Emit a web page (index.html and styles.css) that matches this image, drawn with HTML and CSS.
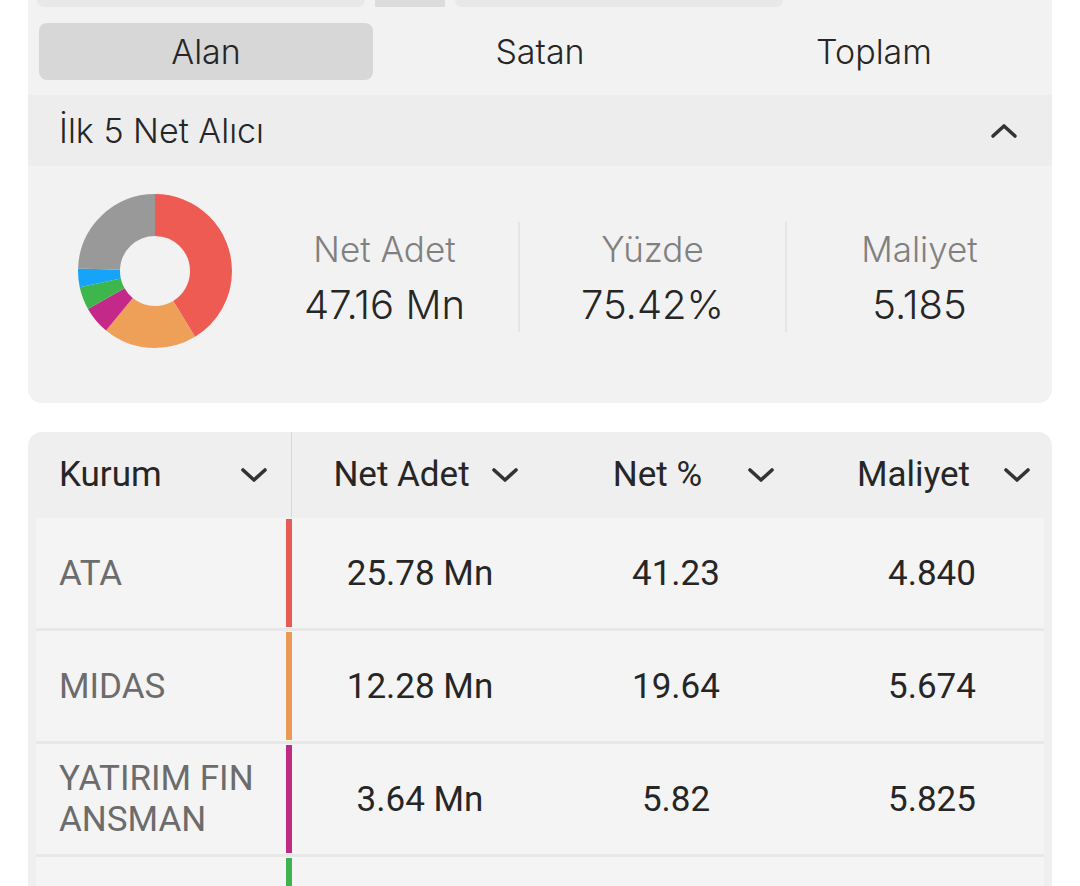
FILE: index.html
```html
<!DOCTYPE html>
<html lang="tr">
<head>
<meta charset="utf-8">
<title>İlk 5 Net Alıcı</title>
<link rel="stylesheet" href="styles.css">
</head>
<body>
<div class="page">
  <section class="summary">
    <div class="peek">
      <div class="peek-a"></div>
      <div class="peek-b"></div>
      <div class="peek-a"></div>
    </div>
    <div class="segmented">
      <div class="seg active">Alan</div>
      <div class="seg">Satan</div>
      <div class="seg">Toplam</div>
    </div>
    <div class="section-head">
      <span>İlk 5 Net Alıcı</span>
      <svg class="chev" width="28" height="16" viewBox="0 0 28 16"><path d="M3 13 L14 3 L25 13" /></svg>
    </div>
    <div class="summary-body">
      <div class="donut-wrap">
        <svg width="154" height="154" viewBox="0 0 154 154">
          <g transform="rotate(-90 77 77)" fill="none" stroke-width="42">
            <circle cx="77" cy="77" r="56" stroke="#ee5b53" stroke-dasharray="145.07 351.86" stroke-dashoffset="0"/>
            <circle cx="77" cy="77" r="56" stroke="#efa058" stroke-dasharray="69.10 351.86" stroke-dashoffset="-145.07"/>
            <circle cx="77" cy="77" r="56" stroke="#c4298a" stroke-dasharray="20.48 351.86" stroke-dashoffset="-214.17"/>
            <circle cx="77" cy="77" r="56" stroke="#3db64b" stroke-dasharray="16.89 351.86" stroke-dashoffset="-234.65"/>
            <circle cx="77" cy="77" r="56" stroke="#15a4f7" stroke-dasharray="13.83 351.86" stroke-dashoffset="-251.54"/>
            <circle cx="77" cy="77" r="56" stroke="#999999" stroke-dasharray="86.49 351.86" stroke-dashoffset="-265.37"/>
          </g>
        </svg>
      </div>
      <div class="stats">
        <div class="stat"><div class="stat-label">Net Adet</div><div class="stat-value">47.16 Mn</div></div>
        <div class="stat"><div class="stat-label">Yüzde</div><div class="stat-value">75.42%</div></div>
        <div class="stat"><div class="stat-label">Maliyet</div><div class="stat-value">5.185</div></div>
      </div>
    </div>
  </section>

  <section class="table">
    <div class="thead">
      <div class="th th-kurum"><span>Kurum</span><svg class="chev" width="28" height="16" viewBox="0 0 28 16"><path d="M3 3 L14 13 L25 3" /></svg></div>
      <div class="th th-num"><span class="th-label">Net Adet</span><svg class="chev" width="28" height="16" viewBox="0 0 28 16"><path d="M3 3 L14 13 L25 3" /></svg></div>
      <div class="th th-num"><span class="th-label">Net %</span><svg class="chev" width="28" height="16" viewBox="0 0 28 16"><path d="M3 3 L14 13 L25 3" /></svg></div>
      <div class="th th-num th-last"><span class="th-label">Maliyet</span><svg class="chev" width="28" height="16" viewBox="0 0 28 16"><path d="M3 3 L14 13 L25 3" /></svg></div>
    </div>
    <div class="tbody">
      <div class="row">
        <div class="name">ATA</div>
        <div class="bar bar-red"></div>
        <div class="val">25.78 Mn</div>
        <div class="val">41.23</div>
        <div class="val val-last">4.840</div>
      </div>
      <div class="row">
        <div class="name">MIDAS</div>
        <div class="bar bar-orange"></div>
        <div class="val">12.28 Mn</div>
        <div class="val">19.64</div>
        <div class="val val-last">5.674</div>
      </div>
      <div class="row">
        <div class="name"><span class="wrap">YATIRIM FINANSMAN</span></div>
        <div class="bar bar-magenta"></div>
        <div class="val">3.64 Mn</div>
        <div class="val">5.82</div>
        <div class="val val-last">5.825</div>
      </div>
      <div class="row">
        <div class="name"></div>
        <div class="bar bar-green"></div>
        <div class="val"></div>
        <div class="val"></div>
        <div class="val val-last"></div>
      </div>
    </div>
  </section>
</div>
</body>
</html>
```

FILE: styles.css
```css
html, body {
  margin: 0;
  padding: 0;
  background: #ffffff;
  height: 886px;
  overflow: hidden;
}
body {
  font-family: Inter, "Noto Sans", sans-serif;
  color: #222222;
}
.page {
  padding: 0 28px;
}

/* summary card */
.summary {
  background: #f2f2f2;
  border-radius: 0 0 14px 14px;
  height: 403px;
}
.peek {
  display: flex;
  gap: 10px;
  padding-left: 9px;
  height: 7px;
}
.peek-a {
  width: 328px;
  background: #e8e8e8;
  border-radius: 0 0 10px 10px;
}
.peek-b {
  width: 70px;
  background: #dcdcdc;
}
.segmented {
  display: grid;
  grid-template-columns: repeat(3, 1fr);
  margin: 16px 11px 0;
  height: 57px;
}
.seg {
  display: flex;
  align-items: center;
  justify-content: center;
  font-size: 34px;
  font-weight: 350;
  color: #262626;
  border-radius: 8px;
}
.seg.active {
  background: #d7d7d7;
}
.section-head {
  margin-top: 15px;
  height: 71px;
  background: #ededed;
  display: flex;
  align-items: center;
  justify-content: space-between;
  padding: 0 34px 0 31px;
  font-size: 34px;
  font-weight: 350;
  color: #262626;
}
.chev path {
  fill: none;
  stroke: #333333;
  stroke-width: 3.6;
  stroke-linecap: round;
  stroke-linejoin: round;
}
.summary-body {
  display: flex;
}
.donut-wrap {
  width: 223px;
  box-sizing: border-box;
  padding: 28px 0 0 50px;
}
.donut-wrap svg {
  display: block;
}
.stats {
  flex: 1;
  display: grid;
  grid-template-columns: repeat(3, 1fr);
  margin-top: 56px;
  height: 110px;
}
.stat {
  text-align: center;
  padding-top: 6px;
}
.stat + .stat {
  border-left: 2px solid #e5e5e5;
}
.stat-label {
  font-size: 35px;
  font-weight: 350;
  line-height: 42px;
  color: #808080;
}
.stat-value {
  margin-top: 10px;
  font-size: 40px;
  font-weight: 350;
  line-height: 50px;
  color: #262626;
}

/* table card */
.table {
  margin-top: 29px;
  background: #efefef;
  border-radius: 14px 14px 0 0;
  font-family: Roboto, "Liberation Sans", sans-serif;
  height: 460px;
  overflow: hidden;
}
.thead {
  display: grid;
  grid-template-columns: 264px 256px 256px 1fr;
  height: 85px;
}
.th {
  display: flex;
  align-items: center;
  font-size: 35px;
  color: #262626;
}
.th-kurum {
  justify-content: space-between;
  padding: 0 23px 0 31px;
  border-right: 1px solid #d8d8d8;
}
.th-num {
  padding: 0 29px 0 20px;
}
.th-last {
  padding-right: 21px;
}
.th-label {
  flex: 1;
  text-align: center;
}
.tbody {
  padding: 1px 8px 0;
}
.row {
  display: grid;
  grid-template-columns: 250px 6px 256px 256px 1fr;
  height: 110px;
  background: #f4f4f4;
  border-bottom: 3px solid #e8e8e8;
}
.name {
  display: flex;
  align-items: center;
  padding: 0 10px 0 23px;
  font-size: 35px;
  line-height: 41px;
  color: #6c6c6c;
}
.wrap {
  word-break: break-all;
  width: 205px;
}
.bar {
  margin: 1px 0;
}
.bar-red { background: #e85a54; }
.bar-orange { background: #eb9a56; }
.bar-magenta { background: #c02a83; }
.bar-green { background: #3fb24f; }
.val {
  display: flex;
  align-items: center;
  justify-content: center;
  font-size: 35px;
  color: #262626;
}
.val-last {
  padding-left: 16px;
}
```
